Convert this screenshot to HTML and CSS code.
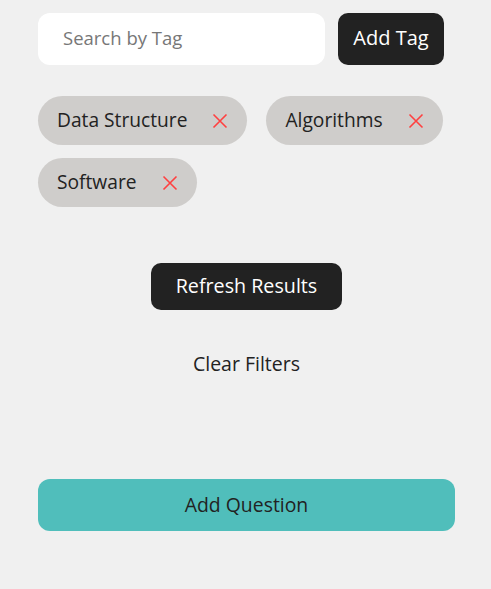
FILE: index.html
```html
<!DOCTYPE html>
<html>
<head>
<meta charset="utf-8">
<link rel="stylesheet" href="styles.css">
</head>
<body>
<div class="page">
  <div class="search-row">
    <input class="search" type="text" placeholder="Search by Tag">
    <button class="btn-dark add-tag">Add Tag</button>
  </div>
  <div class="tags">
    <div class="tag"><span>Data Structure</span><svg class="x" viewBox="0 0 16 16"><path d="M1.5 1.5L14.5 14.5M14.5 1.5L1.5 14.5"/></svg></div>
    <div class="tag"><span>Algorithms</span><svg class="x" viewBox="0 0 16 16"><path d="M1.5 1.5L14.5 14.5M14.5 1.5L1.5 14.5"/></svg></div>
    <div class="tag"><span>Software</span><svg class="x" viewBox="0 0 16 16"><path d="M1.5 1.5L14.5 14.5M14.5 1.5L1.5 14.5"/></svg></div>
  </div>
  <div class="center">
    <button class="btn-dark refresh">Refresh Results</button>
  </div>
  <div class="center">
    <button class="clear">Clear Filters</button>
  </div>
  <button class="add-question">Add Question</button>
</div>
</body>
</html>
```
FILE: styles.css
```css
html, body {
  margin: 0;
  padding: 0;
  background: #f0f0f0;
}
body {
  font-family: "Open Sans", "Noto Sans", sans-serif;
  color: #222;
}
.page {
  width: 417px;
  padding: 13px 0 0 38px;
}
.search-row {
  display: flex;
  gap: 13px;
}
.search {
  box-sizing: border-box;
  width: 287px;
  height: 52px;
  border: none;
  border-radius: 12px;
  background: #fff;
  padding: 0 25px 3px;
  font-family: inherit;
  font-size: 18.5px;
  color: #222;
  outline: none;
}
.search::placeholder {
  color: #777;
}
.btn-dark {
  border: none;
  background: #222;
  color: #fff;
  font-family: inherit;
  border-radius: 10px;
}
.add-tag {
  width: 106px;
  height: 52px;
  padding: 0 0 3px;
  font-size: 20px;
}
.tags {
  margin-top: 31px;
  display: flex;
  flex-wrap: wrap;
  gap: 13px 19px;
}
.tag {
  display: flex;
  align-items: center;
  height: 49px;
  padding: 0 19px;
  border-radius: 25px;
  background: #cfcdcb;
  font-size: 19.2px;
  gap: 25px;
}
.tag span {
  margin-top: -3px;
}
.x {
  width: 16px;
  height: 16px;
  stroke: #ff4040;
  stroke-width: 1.6;
  fill: none;
}
.center {
  display: flex;
  justify-content: center;
}
.refresh {
  margin-top: 56px;
  width: 191px;
  height: 47px;
  padding: 0 0 2px;
  font-size: 19.7px;
}
.clear {
  margin-top: 40px;
  border: none;
  background: none;
  font-family: inherit;
  font-size: 19.5px;
  color: #222;
  padding: 0 0 2px;
  height: 28px;
}
.add-question {
  display: block;
  margin-top: 101px;
  width: 417px;
  height: 52px;
  border: none;
  border-radius: 12px;
  background: #50bebb;
  color: #222;
  font-family: inherit;
  font-size: 19.4px;
  padding: 0 0 2px;
}
```
